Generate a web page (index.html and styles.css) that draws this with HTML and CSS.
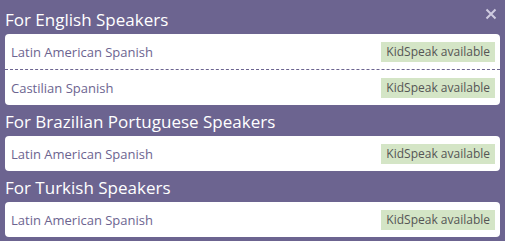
FILE: index.html
```html
<!DOCTYPE html>
<html lang="en">

<head>
  <meta charset="UTF-8">
  <meta name="viewport" content="width=device-width, initial-scale=1.0">
  <title>Courses</title>
  <link rel="stylesheet" href="styles.css">
</head>

<body>
  <div class="panel">
    <span class="close">
      <svg width="12" height="12" viewBox="0 0 12 12">
        <path d="M1.5 1.5 L10.5 10.5 M10.5 1.5 L1.5 10.5" stroke="currentColor" stroke-width="2" />
      </svg>
    </span>

    <h2 class="group-title">For English Speakers</h2>
    <ul class="course-list">
      <li>
        <span class="course-name">Latin American Spanish</span>
        <span class="badge">KidSpeak available</span>
      </li>
      <li>
        <span class="course-name">Castilian Spanish</span>
        <span class="badge">KidSpeak available</span>
      </li>
    </ul>

    <h2 class="group-title">For Brazilian Portuguese Speakers</h2>
    <ul class="course-list">
      <li>
        <span class="course-name">Latin American Spanish</span>
        <span class="badge">KidSpeak available</span>
      </li>
    </ul>

    <h2 class="group-title">For Turkish Speakers</h2>
    <ul class="course-list">
      <li>
        <span class="course-name">Latin American Spanish</span>
        <span class="badge">KidSpeak available</span>
      </li>
    </ul>
  </div>
</body>

</html>
```

FILE: styles.css
```css
* {
  margin: 0;
  padding: 0;
  box-sizing: border-box;
}

ul {
  list-style-type: none;
}

body {
  background: #6c6490;
  font-family: "Open Sans", "Noto Sans", sans-serif;
}

.panel {
  position: relative;
  width: 505px;
  height: 241px;
  padding: 3px 5px 5px;
}

.close {
  position: absolute;
  top: 8px;
  right: 8px;
  width: 12px;
  height: 12px;
  color: #cfcbe0;
}

.close svg {
  display: block;
}

.group-title {
  height: 31px;
  padding-top: 5px;
  line-height: 24px;
  font-size: 17px;
  font-weight: 500;
  color: #fff;
}

.course-list {
  background: #fff;
  border-radius: 4px;
}

.course-list li {
  display: flex;
  align-items: center;
  justify-content: space-between;
  height: 35px;
  padding: 0 5px 0 6px;
}

.course-list li + li {
  height: 36px;
  border-top: 1px dashed #6c6490;
}

.course-name {
  font-size: 13px;
  color: #6c6490;
}

.badge {
  height: 20px;
  line-height: 20px;
  padding: 0 5px;
  background: #d4e5c6;
  color: #555;
  font-size: 12px;
}
```
